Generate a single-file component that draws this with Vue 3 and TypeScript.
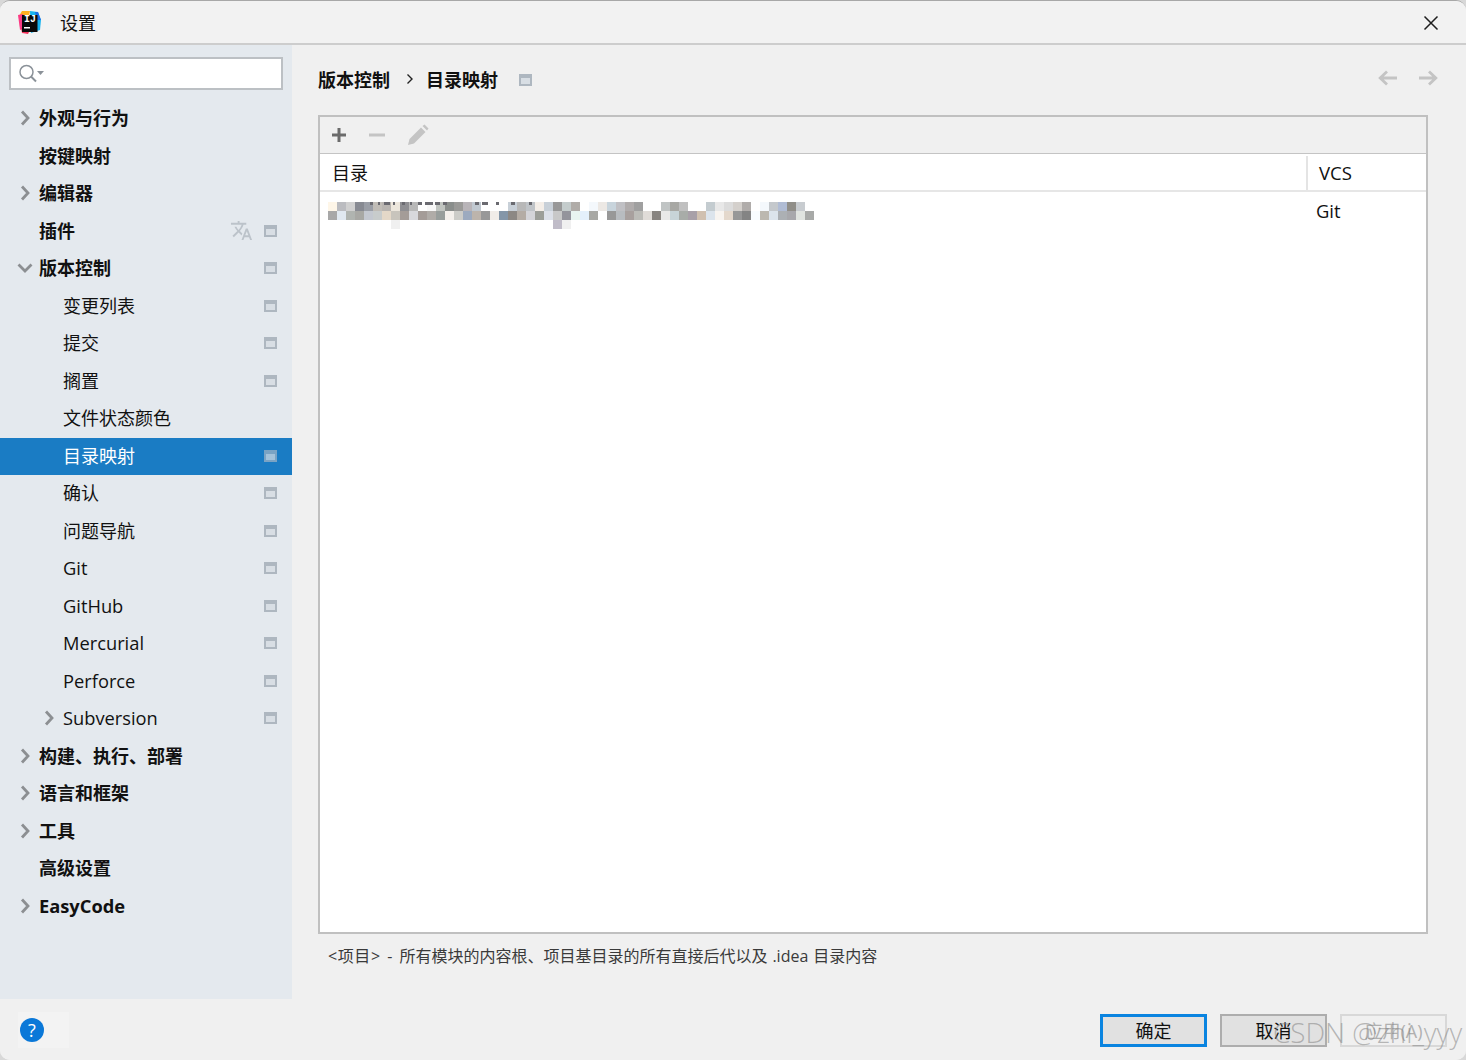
<script setup lang="ts">
interface Row { label: string; level: number; arrow?: 'right' | 'down'; proj?: boolean; trans?: boolean; selected?: boolean }
const rows: Row[] = [
  { label: '外观与行为', level: 0, arrow: 'right' },
  { label: '按键映射', level: 0 },
  { label: '编辑器', level: 0, arrow: 'right' },
  { label: '插件', level: 0, proj: true, trans: true },
  { label: '版本控制', level: 0, arrow: 'down', proj: true },
  { label: '变更列表', level: 1, proj: true },
  { label: '提交', level: 1, proj: true },
  { label: '搁置', level: 1, proj: true },
  { label: '文件状态颜色', level: 1 },
  { label: '目录映射', level: 1, proj: true, selected: true },
  { label: '确认', level: 1, proj: true },
  { label: '问题导航', level: 1, proj: true },
  { label: 'Git', level: 1, proj: true },
  { label: 'GitHub', level: 1, proj: true },
  { label: 'Mercurial', level: 1, proj: true },
  { label: 'Perforce', level: 1, proj: true },
  { label: 'Subversion', level: 1, arrow: 'right', proj: true },
  { label: '构建、执行、部署', level: 0, arrow: 'right' },
  { label: '语言和框架', level: 0, arrow: 'right' },
  { label: '工具', level: 0, arrow: 'right' },
  { label: '高级设置', level: 0 },
  { label: 'EasyCode', level: 0, arrow: 'right' },
]
const isLatin = (s: string) => /^[A-Za-z]+$/.test(s)
const mosaicBits = [42, 3, 5, 2, 4, 6, 3, 2, 7, 3, 5, 2, 6, 4, 3, 8, 2, 5, 3, 4, 28, 4, 3, 6, 8, 3, 12, 4, 14, 3]
const mosaicTop = ['fef6e8','bbbcc0','d0d0d0','878a92','9a9ea6','c0bcb6','b8b4b0','ece6dc','8e8e92','b8b8b8','ffffff','f8f8f8','c0c4c0','8a8e8c','9a9a98','b8b4b8','c0c8d0','ffffff','ffffff','ffffff','c8d0d8','b8b8b8','c0c4c8','f4eee8','c8d0d8','989898','c4cccc','b0aca8','ffffff','f4f8fc','ece8e4','c8d4dc','c0c0c4','b0acac','a0a0a0','ffffff','ffffff','c0c4c4','a8a8a4','c0c0c0','ffffff','ffffff','c4ccd0','e8e8e8','dcdcdc','d4d0cc','b0acaa','ffffff','f4f8fc','c4c8cc','b0bcd4','908e88','c8ccd0']
const mosaicBottom = ['a8a8a8','e0e8f0','b0b4b0','a8a8a4','c4c8d0','c8cccc','e4d8c8','c8c4bc','a49c98','d8d8dc','a49c98','b0aca8','989e9c','f4f0ec','ccccc8','9caabf','bcb4ac','989898','f0ece8','8496a8','8c8884','b4aca4','d4d4d8','9c9e98','dce0e8','c8c8c8','94949c','e8f4f0','e4f0fc','a8a8a4','ffffff','989898','b8bcc0','a8a09e','bcbcb8','e0dcd8','888480','e8e8e8','c8d4d8','a8aca8','a8a0a8','d0c0b0','dce4ec','f8f4f0','e4d8cc','989898','848484','f8fcff','bcb8b0','dce4ec','acb0b4','a8a8ac','e0e4e0','a8aaa8']
const mosaicUnder = ['ffffff','ffffff','ffffff','ffffff','ffffff','ffffff','ffffff','f0f0f0','ffffff','ffffff','ffffff','ffffff','ffffff','ffffff','ffffff','ffffff','ffffff','ffffff','ffffff','ffffff','ffffff','ffffff','ffffff','ffffff','ffffff','c0bcc8','f0f0f0']
</script>

<template>
  <div class="window">
    <header class="titlebar">
      <svg class="logo" viewBox="0 0 24 24" width="24" height="24">
        <path d="M4 1h8l-1 5H1z" fill="#ffb01f" />
        <path d="M0 5l5-1 1 14-4 2z" fill="#fc3a84" />
        <path d="M12 1l8 1 3 8-1 10-9 3z" fill="#18b4f0" />
        <path d="M3 18l9 2-2 4-6-1z" fill="#f3325c" />
        <path d="M17 2l3 0 3 8-4 0z" fill="#1c6fe8" />
        <rect x="4" y="5" width="15.500" height="17" fill="#0a0a0a" />
        <rect x="6" y="17" width="6" height="1.500" fill="#fff" />
      </svg>
      <span class="logo-text">IJ</span>
      <span class="title">设置</span>
      <svg class="close" viewBox="0 0 16 16" width="16" height="16">
        <path d="M1.500 1.500l13 13M14.500 1.500l-13 13" stroke="#1e1e1e" stroke-width="1.500" fill="none" />
      </svg>
    </header>

    <div class="main">
      <aside class="sidebar">
        <div class="search">
          <svg viewBox="0 0 26 20" width="26" height="20">
            <circle cx="8.500" cy="8" r="6.500" fill="none" stroke="#8b9299" stroke-width="1.500" />
            <path d="M13 12.500l5 5" stroke="#8b9299" stroke-width="2" />
            <path d="M19 7h7l-3.500 4z" fill="#8b9299" />
          </svg>
        </div>
        <nav class="tree">
          <div
            v-for="r in rows"
            :key="r.label"
            class="row"
            :class="['level-' + r.level, { selected: r.selected, bold: r.level === 0, latin: isLatin(r.label) }]"
          >
            <svg v-if="r.arrow" class="arrow" viewBox="0 0 16 16" width="16" height="16">
              <path v-if="r.arrow === 'right'" d="M5 1.500L11 8l-6 6.500" fill="none" stroke="#8c8f92" stroke-width="2.800" />
              <path v-else d="M1.500 4.500L8 11l6.500-6.500" fill="none" stroke="#8c8f92" stroke-width="2.800" />
            </svg>
            <span class="label">{{ r.label }}</span>
            <svg v-if="r.trans" class="trans" viewBox="0 0 24 24" width="23" height="23">
              <path fill="#bcc3ca" d="M12.870 15.070l-2.540-2.510.03-.03c1.740-1.940 2.980-4.170 3.710-6.530H17V4h-7V2H8v2H1v1.990h11.170C11.500 7.920 10.440 9.750 9 11.350 8.070 10.320 7.300 9.190 6.690 8h-2c.73 1.630 1.730 3.170 2.980 4.560l-5.090 5.020L4 19l5-5 3.110 3.110.76-2.040zM18.500 10h-2L12 22h2l1.120-3h4.750L21 22h2l-4.500-12zm-2.620 7l1.620-4.330L19.120 17h-3.240z" />
            </svg>
            <i v-if="r.proj" class="proj"></i>
          </div>
        </nav>
      </aside>

      <section class="content">
        <div class="crumbs">
          <span class="crumb">版本控制</span>
          <svg class="crumb-sep" viewBox="0 0 8 12" width="8" height="12">
            <path d="M1.500 1.500L6 6l-4.500 4.500" fill="none" stroke="#222" stroke-width="1.400" />
          </svg>
          <span class="crumb">目录映射</span>
          <i class="proj crumb-proj"></i>
          <div class="nav-arrows">
            <svg viewBox="0 0 20 16" width="20" height="16">
              <path d="M19 8H2M9 1.500L2.200 8 9 14.500" fill="none" stroke="#c4c4c4" stroke-width="2.800" />
            </svg>
            <svg viewBox="0 0 20 16" width="20" height="16">
              <path d="M1 8h17M11 1.500L17.800 8 11 14.500" fill="none" stroke="#c4c4c4" stroke-width="2.800" />
            </svg>
          </div>
        </div>

        <div class="panel">
          <div class="toolbar">
            <svg viewBox="0 0 16 16" width="16" height="16">
              <path d="M8 1v14M1 8h14" stroke="#6b6b6b" stroke-width="3" />
            </svg>
            <svg viewBox="0 0 16 16" width="16" height="16">
              <path d="M0 8h16" stroke="#c4c4c4" stroke-width="3" />
            </svg>
            <svg viewBox="0 0 22 22" width="22" height="22">
              <path d="M1 21l1.500-6L14 3.500 18.500 8 7 19.500z M15.500 2l2-1.500L21.500 4.500 20 6.500z" fill="#c4c4c4" />
            </svg>
          </div>
          <div class="thead">
            <div class="th th-dir">目录</div>
            <div class="th th-vcs">VCS</div>
          </div>
          <div class="tr">
            <div class="mosaic">
              <div class="mosaic-bits">
                <i v-for="(w, i) in mosaicBits" :key="i" :class="{ on: i % 2 === 1 }" :style="{ width: w + 'px' }"></i>
              </div>
              <div class="mosaic-row">
                <i v-for="(c, i) in mosaicTop" :key="i" :style="{ background: '#' + c }"></i>
              </div>
              <div class="mosaic-row">
                <i v-for="(c, i) in mosaicBottom" :key="i" :style="{ background: '#' + c }"></i>
              </div>
              <div class="mosaic-row">
                <i v-for="(c, i) in mosaicUnder" :key="i" :style="{ background: '#' + c }"></i>
              </div>
            </div>
            <span class="git">Git</span>
          </div>
        </div>

        <p class="note"><span class="note-prefix">&lt;项目&gt; - </span>所有模块的内容根、项目基目录的所有直接后代以及 .idea 目录内容</p>
      </section>
    </div>

    <footer class="footer">
      <div class="help-wrap"><span class="help">?</span></div>
      <div class="buttons">
        <button class="btn primary">确定</button>
        <button class="btn">取消</button>
        <button class="btn disabled">应用(A)</button>
      </div>
      <span class="watermark">CSDN @zhi_yyy</span>
    </footer>
  </div>
</template>

<style>
html, body { background: #d8d8d8; }
</style>

<style scoped>
.window {
  position: relative;
  width: 1466px;
  height: 1060px;
  box-sizing: border-box;
  display: flex;
  flex-direction: column;
  background: #f0f0f0;
  border-top: 1px solid #a8a8a8;
  border-radius: 10px;
  overflow: hidden;
  font-family: "Open Sans", "Noto Sans CJK SC", sans-serif;
  font-size: 18px;
  color: #111;
}
.titlebar {
  position: relative;
  flex: 0 0 42px;
  display: flex;
  align-items: center;
  box-sizing: content-box;
  padding-left: 18px;
  border-bottom: 2px solid #cdcdcd;
  background: #f2f2f2;
}
.logo { flex: none; }
.logo-text {
  position: absolute;
  left: 24px;
  top: 14px;
  font: 700 10px/10px "Liberation Mono", monospace;
  color: #fff;
}
.title { margin-left: 18px; font-size: 18px; }
.close { position: absolute; right: 27px; top: 14px; }

.main { flex: 1; display: flex; min-height: 0; }
.sidebar {
  flex: 0 0 292px;
  background: #e4e9ee;
  padding-top: 12px;
  box-sizing: border-box;
}
.search {
  margin: 0 9px 0 9px;
  height: 33px;
  box-sizing: border-box;
  border: 2px solid #bcc0c4;
  background: #fff;
  display: flex;
  align-items: center;
  padding-left: 7px;
}
.tree { margin-top: 10px; }
.row {
  position: relative;
  height: 37.5px;
  display: flex;
  align-items: center;
  line-height: 1;
  white-space: nowrap;
}
.row.latin .label { font-size: 18.3px; }
.row.bold .label { font-weight: 700; }
.level-0 { padding-left: 39px; }
.level-1 { padding-left: 63px; }
.row.selected { background: #1a7cc4; color: #fff; }
.arrow { position: absolute; top: 10px; }
.level-0 .arrow { left: 17px; }
.level-1 .arrow { left: 41px; }
.label { flex: 1; margin-top: -1px; }
.trans { margin: -1px 11px 0 0; }
.proj {
  display: block;
  flex: none;
  box-sizing: border-box;
  width: 13px;
  height: 12px;
  margin: -1px 15px 0 0;
  background: #d8dee4;
  border: 2px solid #aeb7c0;
  border-top-width: 4px;
}
.selected .proj { background: #a4c2da; border-color: #7aa3c4; }

.content {
  flex: 1;
  min-width: 0;
  padding: 0 38px 0 26px;
  display: flex;
  flex-direction: column;
}
.crumbs {
  flex: 0 0 70px;
  box-sizing: border-box;
  padding-bottom: 2px;
  display: flex;
  align-items: center;
}
.crumb { font-weight: 700; }
.crumb-sep { margin: 0 12px 0 16px; }
.crumb-proj { margin: 2px 0 0 21px; }
.nav-arrows {
  margin-left: auto;
  margin-right: -10px;
  display: flex;
  gap: 20px;
  margin-top: -2px;
}
.panel {
  flex: 0 0 819px;
  box-sizing: border-box;
  border: 2px solid #c0c0c0;
  background: #fff;
  display: flex;
  flex-direction: column;
}
.toolbar {
  flex: 0 0 36px;
  background: #f0f0f0;
  border-bottom: 1px solid #c4c4c4;
  display: flex;
  align-items: center;
  padding-left: 11px;
  gap: 22px;
}
.thead {
  flex: 0 0 38px;
  box-sizing: border-box;
  border-bottom: 2px solid #e6e6e6;
  display: flex;
  padding-top: 2px;
}
.th { display: flex; align-items: center; line-height: 1; }
.th-dir { flex: 1; padding-left: 12px; }
.th-vcs {
  flex: 0 0 120px;
  box-sizing: border-box;
  padding-left: 11px;
  border-left: 2px solid #e4e4e4;
  font-size: 18.6px;
}
.tr {
  position: relative;
  height: 38px;
  display: flex;
  align-items: flex-start;
}
.mosaic {
  margin: 6px 0 0 8px;
  display: flex;
  flex-direction: column;
  filter: blur(0.5px);
}
.mosaic-bits {
  position: relative;
  z-index: 1;
  display: flex;
  height: 3px;
  margin: 4px 0 -3px;
}
.mosaic-bits i { display: block; height: 3px; }
.mosaic-bits i.on { background: #6a6a70; }
.mosaic-row { display: flex; height: 9px; }
.mosaic-row i { display: block; flex: 0 0 9px; height: 9px; }
.git { position: absolute; left: 996px; top: 8px; line-height: 21px; font-size: 18.4px; }
.note {
  margin: 12px 0 0 10px;
  font-size: 16px;
  line-height: 20px;
  color: #3a3a3a;
  white-space: nowrap;
  word-spacing: 0.7px;
}
.note-prefix { letter-spacing: 0.6px; word-spacing: 1.8px; }
.footer {
  position: relative;
  flex: 0 0 61px;
  display: flex;
  align-items: flex-start;
  justify-content: space-between;
  background: #f0f0f0;
}
.help-wrap {
  margin: 13px 0 0 18px;
  width: 51px;
  height: 36px;
  background: #f3f3f3;
  display: flex;
  align-items: center;
}
.help {
  width: 24px;
  height: 24px;
  margin-left: 2px;
  border-radius: 50%;
  background: #0a78d8;
  color: #fff;
  font-size: 18px;
  line-height: 24px;
  text-align: center;
}
.buttons {
  display: flex;
  gap: 13px;
  margin: 15px 19px 0 0;
}
.btn {
  width: 107px;
  height: 33px;
  box-sizing: border-box;
  border: 2px solid #adadad;
  background: #e1e1e1;
  font: inherit;
  line-height: 1;
  color: #111;
  padding: 0;
}
.btn.primary { border: 3px solid #0a84e0; }
.btn.disabled { border-color: #d8d8d8; background: #f0f0f0; color: #b0b0b0; }
.watermark {
  position: absolute;
  left: 1273px;
  top: 16px;
  font-family: "Open Sans", sans-serif;
  font-weight: 300;
  font-size: 27.8px;
  line-height: 34px;
  color: rgba(130, 130, 130, 0.55);
  white-space: nowrap;
}
</style>
